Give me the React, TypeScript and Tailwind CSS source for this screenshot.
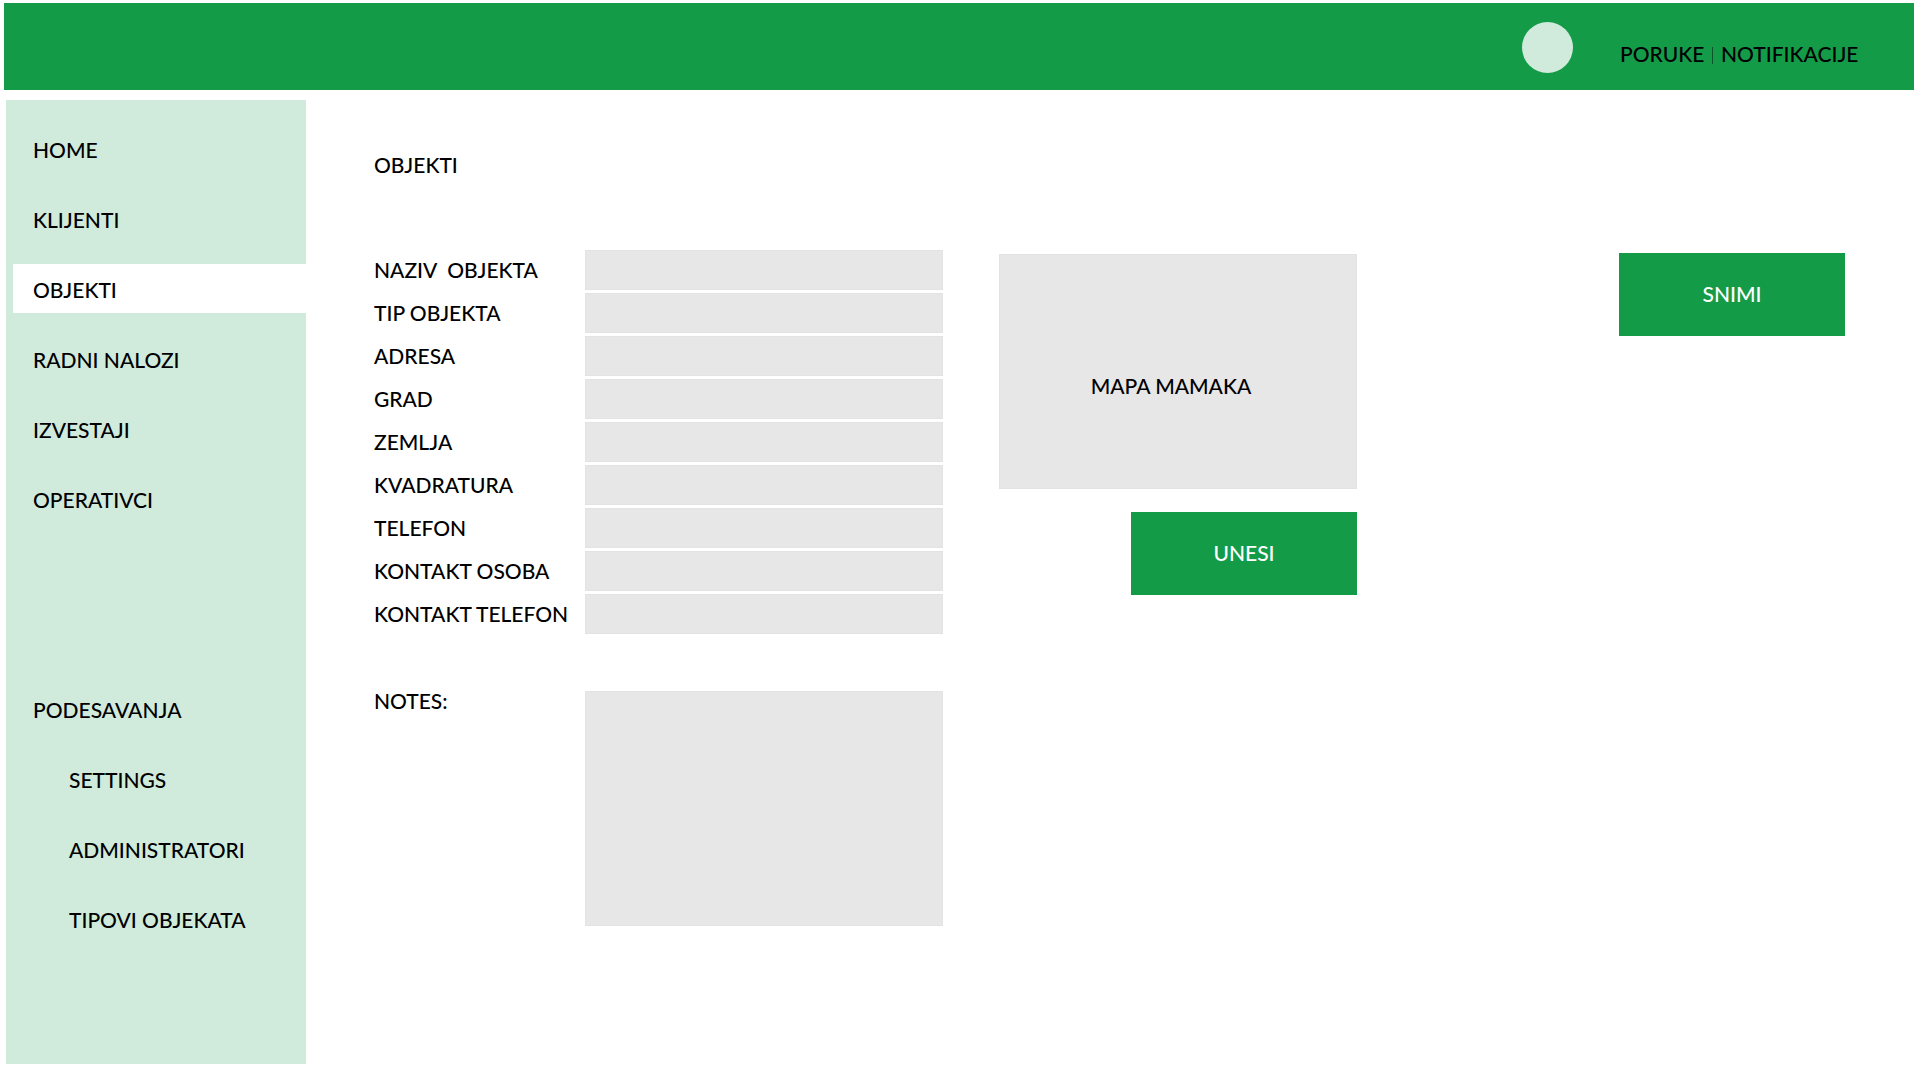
type NavItem = { label: string; active?: boolean; nested?: boolean };

const mainNav: NavItem[] = [
  { label: "HOME" },
  { label: "KLIJENTI" },
  { label: "OBJEKTI", active: true },
  { label: "RADNI NALOZI" },
  { label: "IZVESTAJI" },
  { label: "OPERATIVCI" },
];

const settingsNav: NavItem[] = [
  { label: "PODESAVANJA" },
  { label: "SETTINGS", nested: true },
  { label: "ADMINISTRATORI", nested: true },
  { label: "TIPOVI OBJEKATA", nested: true },
];

const fields = [
  { id: "naziv", label: "NAZIV  OBJEKTA" },
  { id: "tip", label: "TIP OBJEKTA" },
  { id: "adresa", label: "ADRESA" },
  { id: "grad", label: "GRAD" },
  { id: "zemlja", label: "ZEMLJA" },
  { id: "kvadratura", label: "KVADRATURA" },
  { id: "telefon", label: "TELEFON" },
  { id: "kontakt-osoba", label: "KONTAKT OSOBA" },
  { id: "kontakt-telefon", label: "KONTAKT TELEFON" },
];

function NavList({ items }: { items: NavItem[] }) {
  return (
    <ul className="flex flex-col gap-[21px]">
      {items.map((item) => (
        <li key={item.label}>
          <a
            href="#"
            aria-current={item.active ? "page" : undefined}
            className={`ml-[7px] flex h-[49px] items-center pt-[2px] ${item.nested ? "pl-14" : "pl-5"} ${item.active ? "bg-white" : ""}`}
          >
            {item.label}
          </a>
        </li>
      ))}
    </ul>
  );
}

function ActionButton({ label }: { label: string }) {
  return (
    <button type="button" className="h-[83px] w-[226px] shrink-0 bg-[#139b48] pb-[2px] text-white">
      {label}
    </button>
  );
}

export default function App() {
  return (
    <div className="bg-white font-['Lato',sans-serif] text-[21px] leading-[26px] font-medium text-black">
      <header className="mt-[3px] mr-[6px] ml-[4px] flex h-[87px] items-start justify-end bg-[#139b48] pr-[51px]">
        <div className="mt-[19px] mr-[47px] size-[51px] rounded-full bg-[#d0ebdc]" />
        <nav className="mt-[38px] flex">
          <a href="#" className="w-[86px]">PORUKE</a>
          <span className="mr-2 ml-[6px] mt-[6px] h-[17px] w-px bg-[#0b5528]" />
          <a href="#" className="w-[142px]">NOTIFIKACIJE</a>
        </nav>
      </header>

      <div className="mt-[10px] flex pb-4">
        <aside className="ml-[6px] w-[300px] shrink-0 bg-[#d0ebdc] pt-6 pb-[121px]">
          <nav className="flex flex-col gap-[161px]">
            <NavList items={mainNav} />
            <NavList items={settingsNav} />
          </nav>
        </aside>

        <main className="grow pt-[52px] pr-[75px] pl-[68px]">
          <h1>OBJEKTI</h1>
          <div className="mt-[72px] flex items-start">
            <form className="flex flex-col gap-[3px]">
              {fields.map((field) => (
                <div key={field.id} className="flex items-center">
                  <label htmlFor={field.id} className="w-[211px] whitespace-pre">
                    {field.label}
                  </label>
                  <input
                    id={field.id}
                    type="text"
                    className="h-10 w-[358px] border border-[#e3e3e3] bg-[#e7e7e7] px-3"
                  />
                </div>
              ))}
              <div className="mt-[54px] flex items-start">
                <label htmlFor="notes" className="-mt-[3px] w-[211px]">
                  NOTES:
                </label>
                <textarea
                  id="notes"
                  className="h-[235px] w-[358px] resize-none border border-[#e3e3e3] bg-[#e7e7e7] p-3"
                />
              </div>
            </form>

            <section className="mt-1 ml-14 flex w-[358px] flex-col items-end gap-[23px]">
              <div className="flex h-[235px] w-full items-center justify-center border border-[#e3e3e3] bg-[#e7e7e7] pt-7 pr-[14px]">
                MAPA MAMAKA
              </div>
              <ActionButton label="UNESI" />
            </section>

            <div className="mt-[3px] ml-auto">
              <ActionButton label="SNIMI" />
            </div>
          </div>
        </main>
      </div>
    </div>
  );
}
